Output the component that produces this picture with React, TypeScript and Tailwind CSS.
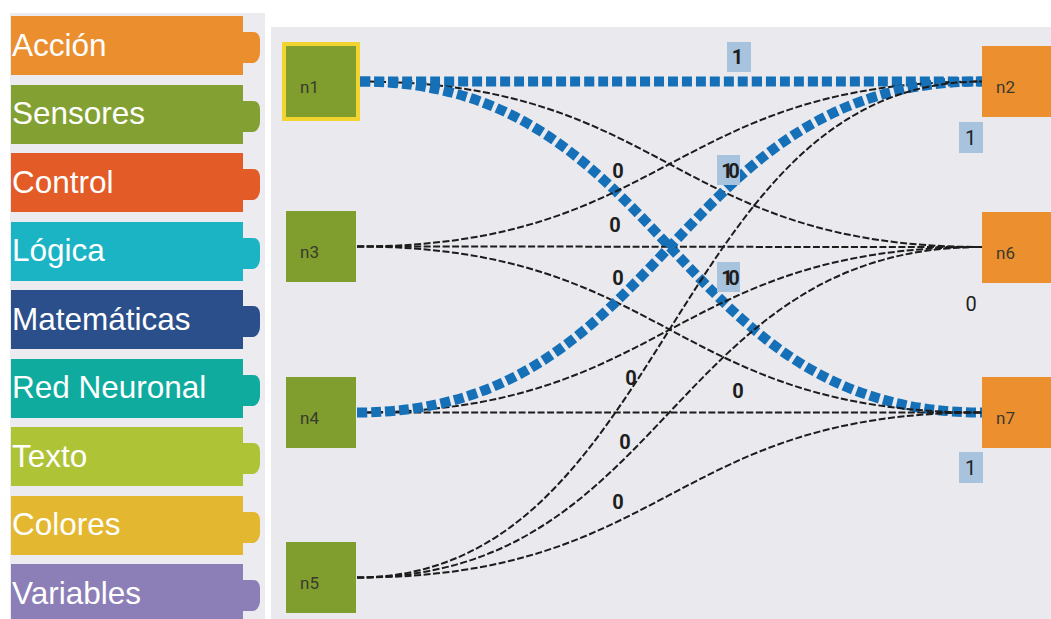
import React from "react";

const cats = [
  { name: "Acción", color: "#eb8e2e" },
  { name: "Sensores", color: "#83a032" },
  { name: "Control", color: "#e35b26" },
  { name: "Lógica", color: "#1bb4c5" },
  { name: "Matemáticas", color: "#2b4f8a" },
  { name: "Red Neuronal", color: "#0fab9e" },
  { name: "Texto", color: "#afc337" },
  { name: "Colores", color: "#e4b730" },
  { name: "Variables", color: "#8c7eb6" },
];

const OX = 271;
const OY = 27;

const leftY: Record<string, number> = { n1: 81.5, n3: 246.5, n4: 412.5, n5: 577.5 };
const rightY: Record<string, number> = { n2: 81.5, n6: 247, n7: 412.5 };

const conns: { from: string; to: string; blue: boolean }[] = [
  { from: "n1", to: "n2", blue: true },
  { from: "n1", to: "n6", blue: false },
  { from: "n1", to: "n7", blue: true },
  { from: "n3", to: "n2", blue: false },
  { from: "n3", to: "n6", blue: false },
  { from: "n3", to: "n7", blue: false },
  { from: "n4", to: "n6", blue: false },
  { from: "n4", to: "n7", blue: false },
  { from: "n4", to: "n2", blue: true },
  { from: "n5", to: "n2", blue: false },
  { from: "n5", to: "n6", blue: false },
  { from: "n5", to: "n7", blue: false },
];

type Label = { x: number; y: number; t: string; box?: boolean; bold?: boolean; w?: number; h?: number };

const labels: Label[] = [
  { x: 739, y: 57, t: "", box: true, w: 24, h: 30 },
  { x: 737.5, y: 57, t: "1", bold: true },
  { x: 618, y: 171, t: "0", bold: true },
  { x: 728.5, y: 170, t: "", box: true, w: 23, h: 30 },
  { x: 727, y: 171, t: "1", bold: true },
  { x: 734, y: 171, t: "0", bold: true },
  { x: 615, y: 225, t: "0", bold: true },
  { x: 618, y: 278, t: "0", bold: true },
  { x: 728.5, y: 277, t: "", box: true, w: 23, h: 30 },
  { x: 727, y: 278, t: "1", bold: true },
  { x: 734, y: 278, t: "0", bold: true },
  { x: 631, y: 378, t: "0", bold: true },
  { x: 738, y: 391, t: "0", bold: true },
  { x: 625, y: 442, t: "0", bold: true },
  { x: 618, y: 502, t: "0", bold: true },
  { x: 971, y: 137.5, t: "", box: true, w: 24, h: 31 },
  { x: 970.5, y: 138, t: "1" },
  { x: 971, y: 304, t: "0" },
  { x: 971, y: 467.5, t: "", box: true, w: 24, h: 31 },
  { x: 970.5, y: 468, t: "1" },
];

function Tab({ color }: { color: string }) {
  return (
    <svg width="18" height="31" viewBox="0 0 18 31" className="mt-[16px] shrink-0 self-start">
      <path d="M0 0 H10 C15 0 17 4 17 9 V20 C17 26 14 31 9 31 H0 Z" fill={color} />
    </svg>
  );
}

function NodeBox({ x, y, label, color }: { x: number; y: number; label: string; color: string }) {
  return (
    <div
      className="absolute flex h-[71px] w-[70px] items-center pl-[14px] pt-[12px] text-[17px] text-[#3a3a2e]"
      style={{ left: x - OX, top: y - OY, backgroundColor: color, fontFamily: "Roboto, 'Noto Sans', sans-serif" }}
    >
      {label}
    </div>
  );
}

export default function App() {
  return (
    <div className="flex h-[619px] w-[1051px] overflow-hidden bg-white">
      <div className="ml-[10px] mt-[13px] flex h-[640px] w-[255px] shrink-0 flex-col gap-[9.5px] bg-[#ececf0] pl-[1px] pt-[3px]">
        {cats.map((c) => (
          <div key={c.name} className="flex h-[59px] shrink-0">
            <div
              className="flex h-[59px] w-[232px] items-center pl-[1px] text-[31.5px] leading-none text-white"
              style={{ backgroundColor: c.color, fontFamily: "'Liberation Sans', Arial, sans-serif" }}
            >
              {c.name}
            </div>
            <Tab color={c.color} />
          </div>
        ))}
      </div>

      <div className="relative ml-[6px] mt-[27px] h-[592px] w-[780px] shrink-0 overflow-hidden bg-[#e9e9ee]">
        <svg className="absolute left-0 top-0" width="780" height="592" viewBox={`${OX} ${OY} 780 592`}>
          {conns.map((c, i) => {
            const x1 = c.from === "n1" ? 360 : 357;
            const y1 = leftY[c.from];
            const x2 = 982;
            const y2 = rightY[c.to];
            const mx = (357 + 982) / 2;
            const d = `M${x1} ${y1} C${mx} ${y1} ${mx} ${y2} ${x2} ${y2}`;
            return c.blue ? (
              <path key={i} d={d} fill="none" stroke="#1670b7" strokeWidth={10} strokeDasharray="10 4" />
            ) : (
              <path key={i} d={d} fill="none" stroke="#1c1c1c" strokeWidth={2} strokeDasharray="7 2.5" />
            );
          })}
        </svg>

        <div
          className="absolute flex h-[79px] w-[78px] items-center border-4 border-[#f2d430] bg-[#7f9e2e] pl-[14px] pt-[12px] text-[17px] text-[#3a3a2e]"
          style={{ left: 282 - OX, top: 42 - OY, fontFamily: "Roboto, 'Noto Sans', sans-serif" }}
        >
          n1
        </div>
        <NodeBox x={286} y={211} label="n3" color="#7f9e2e" />
        <NodeBox x={286} y={377} label="n4" color="#7f9e2e" />
        <NodeBox x={286} y={542} label="n5" color="#7f9e2e" />
        <NodeBox x={982} y={46} label="n2" color="#ec902f" />
        <NodeBox x={982} y={212} label="n6" color="#ec902f" />
        <NodeBox x={982} y={377} label="n7" color="#ec902f" />

        {labels.map((l, i) =>
          l.box ? (
            <div
              key={i}
              className="absolute bg-[#a8c3de]"
              style={{ left: l.x - OX - (l.w ?? 24) / 2, top: l.y - OY - (l.h ?? 30) / 2, width: l.w, height: l.h }}
            />
          ) : (
            <div
              key={i}
              className={`absolute -translate-x-1/2 -translate-y-1/2 text-[20px] leading-none text-[#1e1e1e] ${l.bold ? "font-bold" : "font-normal"}`}
              style={{ left: l.x - OX, top: l.y - OY, fontFamily: "Roboto, 'Noto Sans', sans-serif" }}
            >
              {l.t}
            </div>
          )
        )}
      </div>
    </div>
  );
}
